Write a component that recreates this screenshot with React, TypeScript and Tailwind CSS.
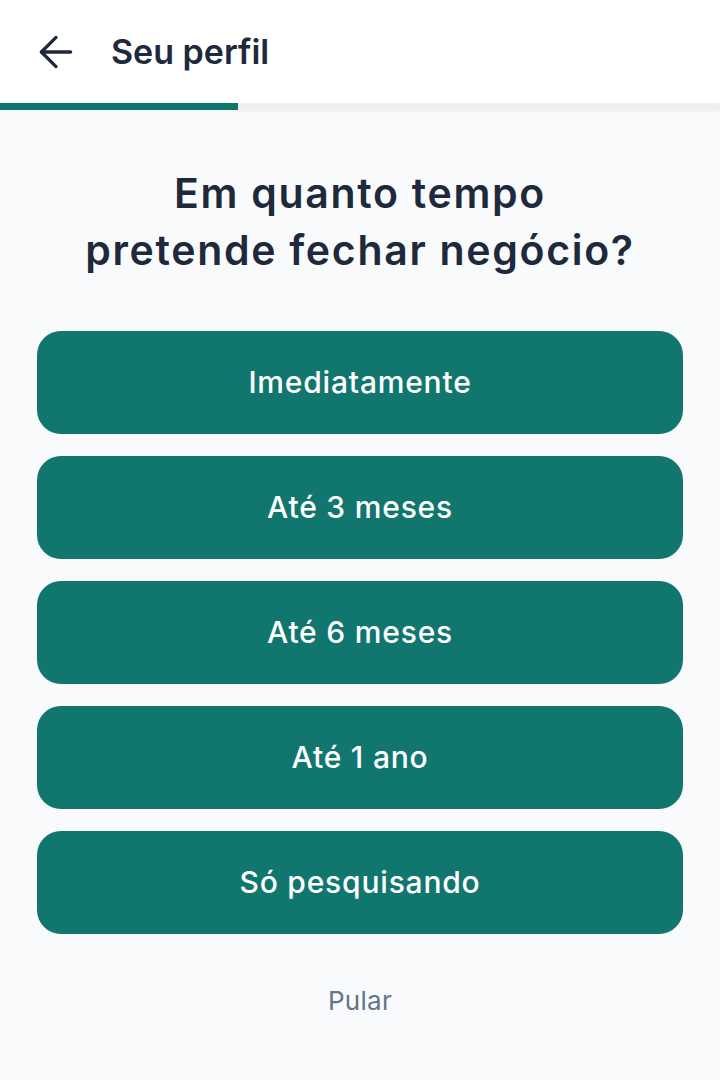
import { ArrowLeft } from "lucide-react";

const options = ["Imediatamente", "Até 3 meses", "Até 6 meses", "Até 1 ano", "Só pesquisando"];

export default function App() {
  return (
    <div
      className="min-h-[1080px] w-[720px] bg-[#f8fafc] flex flex-col"
      style={{ fontFamily: "Inter, 'Noto Sans', sans-serif" }}
    >
      <header className="bg-white h-[103px] flex items-center pl-[31px] gap-[30px]">
        <button className="text-[#1e293b] cursor-pointer">
          <ArrowLeft className="h-[50px] w-[50px]" strokeWidth={1.6} />
        </button>
        <h1 className="text-[34px] font-semibold text-[#1e293b]">Seu perfil</h1>
      </header>
      <div className="h-[7px] bg-[#eef1f4] flex shadow-[0_2px_3px_rgba(0,0,0,0.04)]">
        <div className="w-[238px] bg-[#0f766e]" />
      </div>

      <main className="flex flex-col px-[37px] pt-[55px]">
        <h2 className="text-center text-[41px] leading-[57px] font-semibold text-[#1e293b] tracking-[1.7px]">
          Em quanto tempo
          <br />
          pretende fechar negócio?
        </h2>

        <div className="mt-[52px] flex flex-col gap-[22px]">
          {options.map((o) => (
            <button
              key={o}
              className="h-[103px] rounded-[24px] bg-[#11766d] text-white text-[30px] font-medium tracking-[0.8px] cursor-pointer"
            >
              {o}
            </button>
          ))}
        </div>

        <button className="mt-[47px] text-[26px] tracking-[0.3px] text-[#64748b] cursor-pointer self-center">
          Pular
        </button>
      </main>
    </div>
  );
}
